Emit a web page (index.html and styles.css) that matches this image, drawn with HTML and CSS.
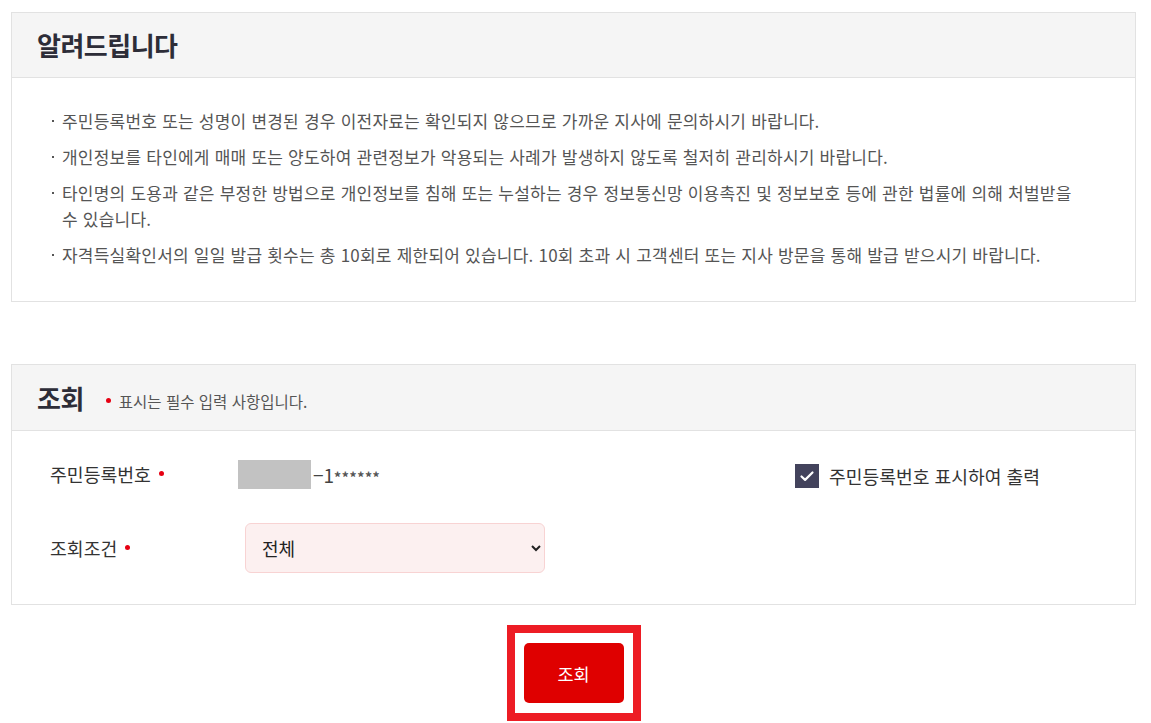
FILE: index.html
```html
<!DOCTYPE html>
<html lang="ko">
<head>
<meta charset="utf-8">
<link rel="stylesheet" href="styles.css">
</head>
<body>
<div class="page">
  <section class="box notice">
    <div class="box-head"><h2 class="box-title">알려드립니다</h2></div>
    <ul class="notice-list">
      <li>주민등록번호 또는 성명이 변경된 경우 이전자료는 확인되지 않으므로 가까운 지사에 문의하시기 바랍니다.</li>
      <li>개인정보를 타인에게 매매 또는 양도하여 관련정보가 악용되는 사례가 발생하지 않도록 철저히 관리하시기 바랍니다.</li>
      <li>타인명의 도용과 같은 부정한 방법으로 개인정보를 침해 또는 누설하는 경우 정보통신망 이용촉진 및 정보보호 등에 관한 법률에 의해 처벌받을 수 있습니다.</li>
      <li>자격득실확인서의 일일 발급 횟수는 총 10회로 제한되어 있습니다. 10회 초과 시 고객센터 또는 지사 방문을 통해 발급 받으시기 바랍니다.</li>
    </ul>
  </section>

  <section class="box search">
    <div class="box-head">
      <h2 class="box-title">조회</h2>
      <span class="req-note"><span class="dot"></span>표시는 필수 입력 사항입니다.</span>
    </div>
    <div class="form">
      <div class="row">
        <div class="label">주민등록번호<span class="dot"></span></div>
        <div class="value">
          <span class="masked"></span><span class="rrn">−1<span class="stars">******</span></span>
        </div>
        <label class="check">
          <span class="checkbox"><svg width="24" height="24" viewBox="0 0 24 24"><path d="M6.5 12.5l3.6 3.4 7.4-7.4" fill="none" stroke="#fff" stroke-width="2.2" stroke-linecap="round" stroke-linejoin="round"/></svg></span>
          주민등록번호 표시하여 출력
        </label>
      </div>
      <div class="row">
        <div class="label">조회조건<span class="dot"></span></div>
        <div class="value">
          <select class="select"><option>전체</option></select>
        </div>
      </div>
    </div>
  </section>

  <div class="actions">
    <div class="highlight"><button class="btn" type="button">조회</button></div>
  </div>
</div>
</body>
</html>
```

FILE: styles.css
```css
* { box-sizing: border-box; }
html, body { margin: 0; padding: 0; background: #fff; }
body {
  font-family: "Noto Sans CJK KR", "Noto Sans", sans-serif;
  color: #333;
  overflow: hidden;
}
.page { padding: 12px 15px 0 11px; }

.box { border: 1px solid #e2e2e2; background: #fff; }
.box-head {
  background: #f5f5f5;
  border-bottom: 1px solid #e2e2e2;
  height: 65px;
  display: flex;
  align-items: center;
  padding-left: 25px;
}
.box-title {
  margin: 0;
  font-size: 26px;
  font-weight: 700;
  color: #2d2d38;
  letter-spacing: -0.5px;
  line-height: 1;
}

.notice-list {
  list-style: none;
  margin: 0;
  padding: 30px 50px 33px 39px;
}
.notice-list li {
  position: relative;
  padding-left: 11px;
  font-size: 17px;
  line-height: 26px;
  color: #555;
  letter-spacing: 0.22px;
  margin-bottom: 10px;
}
.notice-list li:last-child { margin-bottom: 0; }
.notice-list li::before {
  content: "";
  position: absolute;
  left: 1px;
  top: 12px;
  width: 2px;
  height: 2px;
  background: #555;
}

.search { margin-top: 62px; }
.search .box-head { height: 66px; }
.req-note {
  display: flex;
  align-items: center;
  margin-left: 22px;
  margin-top: 6px;
  font-size: 15.5px;
  color: #555;
}
.dot {
  display: inline-block;
  width: 5px;
  height: 5px;
  border-radius: 50%;
  background: #e60012;
}
.req-note .dot { margin-right: 8px; }

.form { padding: 18px 0 31px 38px; }
.row {
  display: flex;
  align-items: center;
  height: 50px;
}
.row + .row { margin-top: 24px; }
.label {
  width: 188px;
  font-size: 18.3px;
  color: #333;
  display: flex;
  align-items: center;
}
.label .dot { margin-left: 8px; margin-top: -2px; }
.value { display: flex; align-items: center; }
.masked {
  display: inline-block;
  width: 73px;
  height: 29px;
  background: #c2c2c2;
}
.rrn {
  font-size: 19px;
  color: #444;
  margin-left: 2px;
}
.stars { font-size: 14px; font-weight: 700; color: #555; letter-spacing: 0.6px; }

.check {
  margin-left: auto;
  margin-right: 95px;
  display: flex;
  align-items: center;
  font-size: 18.2px;
  color: #333;
  margin-top: 3px;
}
.checkbox {
  width: 24px;
  height: 24px;
  background: #43435c;
  margin-right: 10px;
  display: flex;
}

.select {
  margin-left: 7px;
  width: 300px;
  height: 50px;
  background: #fcf0f0;
  border: 1px solid #f8d3d3;
  border-radius: 6px;
  font-family: "Noto Sans CJK KR", sans-serif;
  font-size: 18px;
  color: #222;
  padding: 0 12px 0 12px;
}

.actions {
  display: flex;
  justify-content: center;
  padding-top: 20px;
}
.highlight {
  border: 8px solid #ed1c24;
  padding: 10px 9px;
}
.btn {
  display: block;
  width: 100px;
  height: 60px;
  border: 0;
  border-radius: 5px;
  background: #df0000;
  color: #fff;
  font-family: "Noto Sans CJK KR", sans-serif;
  font-size: 17.5px;
}
```
